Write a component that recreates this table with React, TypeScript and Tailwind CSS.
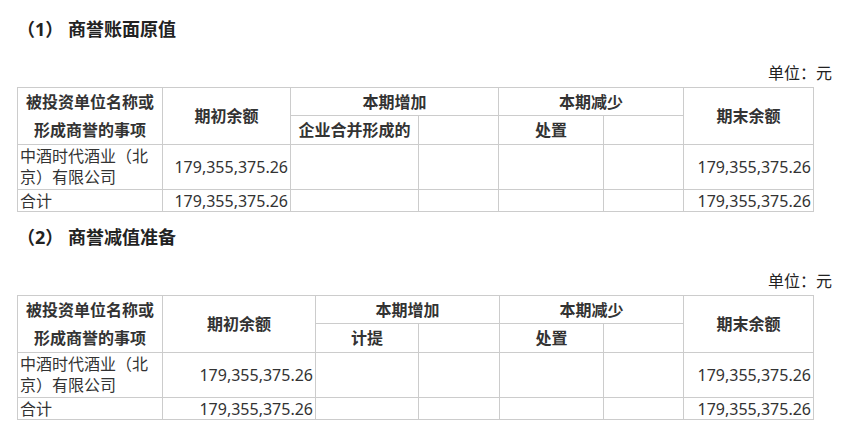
import React from "react";

const font = { fontFamily: '"Noto Sans", "Noto Sans CJK SC", sans-serif' };

type Props = {
  title: string;
  widths: number[];
  addLabel: string;
};

function GoodwillTable({ title, widths, addLabel }: Props) {
  const b = "border border-[#cccccc]";
  return (
    <div>
      <div className="h-[24px] pl-[17px] text-[18px] leading-[24px] font-bold text-[#222222]">
        {title}
      </div>
      <div className="mt-[18px] h-[28px] pr-[14px] text-right text-[16px] leading-[28px] text-[#222222]">
        单位：元
      </div>
      <table className="ml-[17px] table-fixed border-collapse text-[16px] text-[#333333]" style={{ width: 797 }}>
        <colgroup>
          {widths.map((w, i) => (
            <col key={i} style={{ width: w }} />
          ))}
        </colgroup>
        <tbody>
          <tr className="h-[28px]">
            <th rowSpan={2} className={`${b} p-0 text-center align-middle font-bold leading-[28px]`}>
              被投资单位名称或
              <br />
              形成商誉的事项
            </th>
            <th rowSpan={2} className={`${b} p-0 text-center align-middle font-bold leading-[22px]`}>
              期初余额
            </th>
            <th colSpan={2} className={`${b} p-0 text-center align-middle font-bold leading-[22px]`}>
              本期增加
            </th>
            <th colSpan={2} className={`${b} p-0 text-center align-middle font-bold leading-[22px]`}>
              本期减少
            </th>
            <th rowSpan={2} className={`${b} p-0 text-center align-middle font-bold leading-[22px]`}>
              期末余额
            </th>
          </tr>
          <tr className="h-[29px]">
            <th className={`${b} p-0 text-center align-middle font-bold leading-[22px]`}>{addLabel}</th>
            <th className={`${b} p-0`}></th>
            <th className={`${b} p-0 text-center align-middle font-bold leading-[22px]`}>处置</th>
            <th className={`${b} p-0`}></th>
          </tr>
          <tr className="h-[45px]">
            <td className={`${b} px-[2px] py-0 text-left align-middle leading-[21px]`}>
              中酒时代酒业（北京）有限公司
            </td>
            <td className={`${b} px-[2px] py-0 text-right align-middle leading-[21px]`}>179,355,375.26</td>
            <td className={`${b} p-0`}></td>
            <td className={`${b} p-0`}></td>
            <td className={`${b} p-0`}></td>
            <td className={`${b} p-0`}></td>
            <td className={`${b} px-[2px] py-0 text-right align-middle leading-[21px]`}>179,355,375.26</td>
          </tr>
          <tr className="h-[22px]">
            <td className={`${b} px-[2px] py-0 text-left align-middle leading-[20px]`}>合计</td>
            <td className={`${b} px-[2px] py-0 text-right align-middle leading-[20px]`}>179,355,375.26</td>
            <td className={`${b} p-0`}></td>
            <td className={`${b} p-0`}></td>
            <td className={`${b} p-0`}></td>
            <td className={`${b} p-0`}></td>
            <td className={`${b} px-[2px] py-0 text-right align-middle leading-[20px]`}>179,355,375.26</td>
          </tr>
        </tbody>
      </table>
    </div>
  );
}

export default function App() {
  return (
    <div className="h-[436px] w-[846px] overflow-hidden bg-white pt-[17px]" style={font}>
      <GoodwillTable
        title="（1） 商誉账面原值"
        widths={[145, 128, 128, 80, 105, 80, 130]}
        addLabel="企业合并形成的"
      />
      <div className="mt-[13px]">
        <GoodwillTable
          title="（2） 商誉减值准备"
          widths={[145, 153, 103, 81, 104, 80, 130]}
          addLabel="计提"
        />
      </div>
    </div>
  );
}
